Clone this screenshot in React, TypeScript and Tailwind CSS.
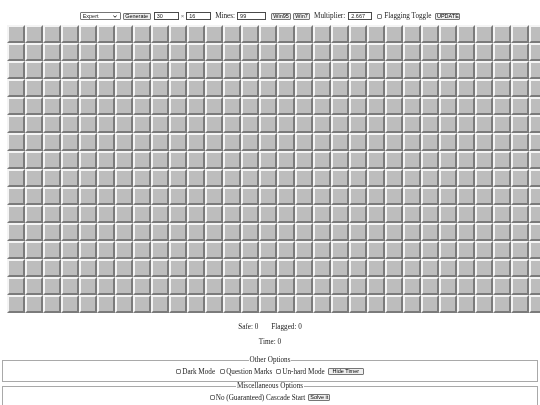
import React from "react";

const serif = "font-['Liberation_Serif','Times_New_Roman',serif]";
const sans = "font-['Liberation_Sans',Arial,sans-serif]";

function Btn({ label, w }: { label: string; w: string }) {
  return (
    <button
      className={`${sans} ${w} h-[7px] shrink-0 bg-[#efefef] border border-[#767676] rounded-[1px] text-[5.5px] leading-[5px] text-black flex items-center justify-center p-0`}
    >
      {label}
    </button>
  );
}

function Field({ value, w }: { value: string; w: string }) {
  return (
    <div
      className={`${sans} ${w} h-[8px] shrink-0 bg-white border border-[#4a4a4a] text-[5.5px] leading-[6px] pl-[2px] flex items-center`}
    >
      {value}
    </div>
  );
}

function Check() {
  return <span className="block w-[5px] h-[5px] shrink-0 border border-[#7a7a7a] rounded-[1px] bg-white" />;
}

export default function App() {
  const cells = Array.from({ length: 30 * 16 }, (_, i) => i);
  return (
    <div className={`${serif} w-[540px] h-[405px] overflow-hidden bg-white text-[#222] text-[7.2px] leading-[8px] [will-change:transform]`}>
      {/* top controls */}
      <div className="h-[25px] pt-[7px] flex items-center justify-center">
        <div className={`${sans} w-[41px] h-[8px] shrink-0 border border-[#767676] rounded-[1px] bg-white text-[5.5px] leading-[6px] pl-[2px] pr-[3px] flex items-center justify-between`}>
          <span>Expert</span>
          <svg width="4" height="3" viewBox="0 0 4 3">
            <path d="M0.4 0.5 L2 2.3 L3.6 0.5" fill="none" stroke="#111" strokeWidth="0.9" />
          </svg>
        </div>
        <div className="ml-[2px]"><Btn label="Generate" w="w-[28px]" /></div>
        <div className="ml-[3px]"><Field value="30" w="w-[25px]" /></div>
        <span className={`${sans} ml-[2px] text-[6px] text-[#777]`}>×</span>
        <div className="ml-[2px]"><Field value="16" w="w-[25px]" /></div>
        <span className="ml-[4px]">Mines:</span>
        <div className="ml-[2px]"><Field value="99" w="w-[29px]" /></div>
        <div className="ml-[5px]"><Btn label="Win95" w="w-[20px]" /></div>
        <div className="ml-[2px]"><Btn label="Win7" w="w-[17px]" /></div>
        <span className="ml-[4px]">Multiplier:</span>
        <div className="ml-[3px]"><Field value="2.667" w="w-[24px]" /></div>
        <div className="ml-[5px]"><Check /></div>
        <span className="ml-[2px]">Flagging Toggle</span>
        <div className="ml-[4px]"><Btn label="UPDATE" w="w-[25px]" /></div>
      </div>

      {/* board */}
      <div className="ml-[7px] w-max grid grid-cols-[repeat(30,18px)]">
        {cells.map((i) => (
          <div
            key={i}
            className="w-[18px] h-[18px] bg-[#bdbdbd] border-2 border-t-[#f4f4f4] border-l-[#f4f4f4] border-r-[#7b7b7b] border-b-[#7b7b7b]"
          />
        ))}
      </div>

      {/* stats */}
      <div className="mt-[10px] h-[9px] leading-[9px] flex justify-center">
        <span>Safe: 0</span>
        <span className="ml-[13px]">Flagged: 0</span>
      </div>
      <div className="mt-[6px] h-[9px] leading-[9px] text-center">Time: 0</div>

      {/* other options */}
      <fieldset className="mx-[2px] mt-[9px] border border-[#a9a9a9] px-[6px] pt-[2px] pb-[5px]">
        <legend className="mx-auto px-[1px] leading-[9px]">Other Options</legend>
        <div className="h-[9px] flex items-center justify-center">
          <Check />
          <span className="ml-[1px]">Dark Mode</span>
          <span className="ml-[5px]"><Check /></span>
          <span className="ml-[1px]">Question Marks</span>
          <span className="ml-[4px]"><Check /></span>
          <span className="ml-[1px]">Un-hard Mode</span>
          <span className="ml-[3px]"><Btn label="Hide Timer" w="w-[36px]" /></span>
        </div>
      </fieldset>

      {/* misc options */}
      <fieldset className="mx-[2px] mt-0 border border-[#a9a9a9] px-[6px] pt-[2px] pb-[5px]">
        <legend className="mx-auto px-[1px] leading-[9px]">Miscellaneous Options</legend>
        <div className="h-[9px] flex items-center justify-center">
          <Check />
          <span className="ml-[1px]">No (Guaranteed) Cascade Start</span>
          <span className="ml-[3px]"><Btn label="Solve it" w="w-[22px]" /></span>
        </div>
      </fieldset>
    </div>
  );
}
